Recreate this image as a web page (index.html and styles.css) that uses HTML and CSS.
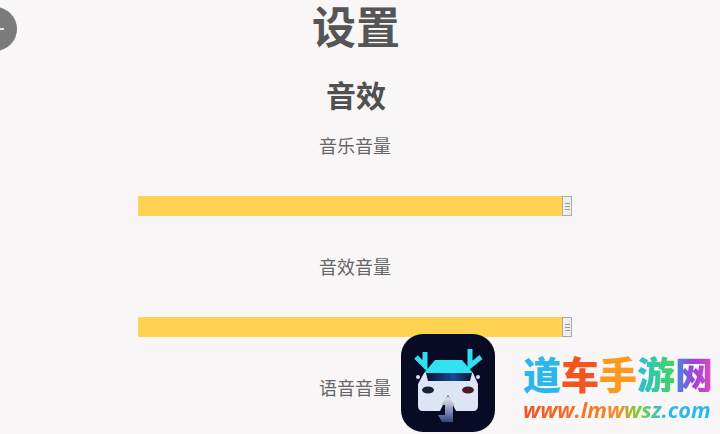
FILE: index.html
```html
<!DOCTYPE html>
<html lang="zh">
<head>
<meta charset="UTF-8">
<title>设置</title>
<link rel="stylesheet" href="styles.css">
</head>
<body>
<div class="back"><span class="back-mark"></span></div>
<div class="page">
    <h1 class="title">设置</h1>
    <h2 class="section">音效</h2>
    <label class="label">音乐音量</label>
    <div class="slider"><div class="fill"></div><div class="handle"><i></i><i></i><i></i></div></div>
    <label class="label">音效音量</label>
    <div class="slider"><div class="fill"></div><div class="handle"><i></i><i></i><i></i></div></div>
    <label class="label">语音音量</label>
</div>
<div class="mark">
    <svg class="app-icon" width="94" height="98" viewBox="0 0 94 98">
        <defs>
            <linearGradient id="arrow" x1="0" y1="0" x2="0" y2="1">
                <stop offset="0" stop-color="#eef2f8"/>
                <stop offset="1" stop-color="#34457f"/>
            </linearGradient>
            <linearGradient id="glass" x1="0" y1="0" x2="1" y2="0">
                <stop offset="0" stop-color="#0a1230"/>
                <stop offset="0.6" stop-color="#1c4a90"/>
                <stop offset="1" stop-color="#0a1230"/>
            </linearGradient>
        </defs>
        <rect x="0" y="0" width="94" height="98" rx="22" fill="#070c24"/>
        <path d="M24 18 V32 L15 23" fill="none" stroke="#2fdcf0" stroke-width="5"/>
        <path d="M69 15 V32 L80 23" fill="none" stroke="#2fdcf0" stroke-width="5"/>
        <path d="M23 39 L34 26 H61 L72 39 Z" fill="#2fe3f2"/>
        <path d="M23 39 H72 L77 50 V72 Q77 77 72 77 H55 L47 61 L39 77 H22 Q17 77 17 72 V50 Z" fill="#dde6f4"/>
        <path d="M25 39 H71 L69 47 H27 Z" fill="url(#glass)"/>
        <ellipse cx="27" cy="56" rx="6" ry="3.5" fill="#1a1f33"/>
        <ellipse cx="67" cy="56" rx="6" ry="3.5" fill="#4a1a26"/>
        <circle cx="17" cy="43" r="2" fill="#dfe6f2"/>
        <circle cx="77" cy="43" r="2" fill="#dfe6f2"/>
        <path d="M47 62 L54 71 H52 V88 H41 L37 81 H44 V71 H40 Z" fill="url(#arrow)"/>
    </svg>
    <div class="brand">
        <div class="brand-name"><span class="c1">道</span><span class="c2">车</span><span class="c3">手</span><span class="c4">游</span><span class="c5">网</span></div>
        <div class="brand-url">www.lmwwsz.com</div>
    </div>
</div>
</body>
</html>
```

FILE: styles.css
```css
html, body
{
    margin: 0;
    padding: 0;
    width: 720px;
    height: 434px;
    overflow: hidden;
    background-color: #f8f6f7;
    font-family: "Noto Sans CJK SC", "Liberation Sans", sans-serif;
}

.page
{
    width: 434px;
    margin-left: 138px;
    display: flex;
    flex-direction: column;
    align-items: center;
    color: #555555;
}

.title
{
    margin: 0 0 0 2px;
    height: 50px;
    font-size: 44px;
    line-height: 50px;
    font-weight: 700;
    color: #555555;
}

.section
{
    margin: 16px 0 2px 2px;
    height: 56px;
    font-size: 30px;
    line-height: 56px;
    font-weight: 700;
    color: #505050;
}

.label
{
    margin-top: 7px;
    height: 28px;
    font-size: 18px;
    line-height: 28px;
    color: #666666;
}

.slider
{
    width: 434px;
    height: 22px;
    margin: 36px 0 28px 0;
    display: flex;
    align-items: center;
}

.fill
{
    flex: 1;
    height: 20px;
    background-color: #ffd351;
}

.handle
{
    width: 8px;
    height: 18px;
    border: 1px solid #aaaaaa;
    background-color: #eeeeee;
    display: flex;
    flex-direction: column;
    justify-content: center;
    align-items: center;
    gap: 2px;
}

.handle i
{
    display: block;
    width: 5px;
    height: 1px;
    background-color: #999999;
}

.back
{
    position: absolute;
    left: -27px;
    top: 7px;
    width: 44px;
    height: 44px;
    border-radius: 50%;
    background-color: #7b7b7b;
}

.back-mark
{
    position: absolute;
    left: 27px;
    top: 21px;
    width: 4px;
    height: 2px;
    background-color: #e4e4e4;
}

.mark
{
    position: absolute;
    left: 401px;
    top: 334px;
    display: flex;
    gap: 28px;
}

.app-icon
{
    display: block;
}

.brand
{
    margin-top: 20px;
}

.brand-name
{
    display: flex;
    font-size: 38px;
    line-height: 38px;
    font-weight: 900;
    white-space: nowrap;
}

.c1 { color: #2cb6ee; }
.c2 { color: #f2551f; }
.c3 { color: #fb9a1d; }
.c4, .c5
{
    background-clip: text;
    -webkit-background-clip: text;
    color: transparent;
}
.c4 { background-image: linear-gradient(90deg, #2cc0d8, #45d35c); }
.c5 { background-image: linear-gradient(90deg, #3f8ee8, #a03fd8, #d94fc0); }

.brand-url
{
    margin-top: 5px;
    font-family: "Open Sans", "Liberation Sans", sans-serif;
    font-size: 21.8px;
    line-height: 26px;
    font-weight: 700;
    font-style: italic;
    white-space: nowrap;
    background: linear-gradient(90deg, #f0532a 0%, #f58a22 50%, #6ed13f 62%, #2ab8ee 76%, #2ab8ee 100%);
    -webkit-background-clip: text;
    background-clip: text;
    color: transparent;
}
```
